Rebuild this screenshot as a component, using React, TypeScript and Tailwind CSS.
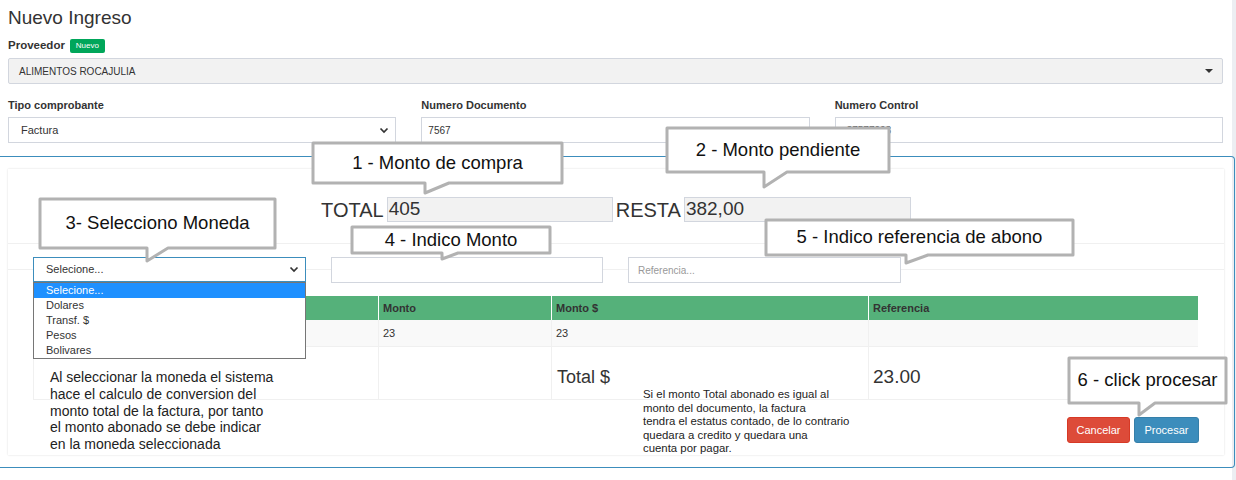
import React from 'react';

type CalloutProps = {
  x: number;
  y: number;
  w: number;
  h: number;
  tailX: number;
  tailW: number;
  tipY: number;
  text: string;
};

// speech bubble overlay used for the tutorial notes
const Callout: React.FC<CalloutProps> = ({ x, y, w, h, tailX, tailW, tipY, text }) => {
  const o = 3;
  const tx = tailX - x + o;
  const tip = tipY - y + o;
  const d = `M${o},${o} H${o + w} V${o + h} H${tx + tailW} L${tx},${tip} V${o + h} H${o} Z`;
  return (
    <>
      <svg
        className="absolute pointer-events-none"
        style={{ left: x - o, top: y - o }}
        width={w + o * 2}
        height={tip + o}
      >
        <path d={d} fill="#fff" stroke="#b2b2b2" strokeWidth="3" strokeLinejoin="round" />
      </svg>
      <div
        className="absolute flex items-center justify-center text-[18.5px] text-[#111] leading-none whitespace-nowrap"
        style={{ left: x, top: y, width: w, height: h }}
      >
        {text}
      </div>
    </>
  );
};

const Chevron: React.FC = () => (
  <svg width="10" height="7" viewBox="0 0 10 7" className="shrink-0">
    <path d="M1.5 1.5 L5 5 L8.5 1.5" fill="none" stroke="#333" strokeWidth="1.7" />
  </svg>
);

const App: React.FC = () => {
  const options = ['Selecione...', 'Dolares', 'Transf. $', 'Pesos', 'Bolivares'];

  return (
    <div
      className="relative w-[1236px] h-[480px] overflow-hidden bg-[linear-gradient(to_right,#fff_1232px,#eceef2_1232px)] text-[#333]"
      style={{ fontFamily: '"Liberation Sans", Arial, sans-serif' }}
    >
      {/* Top form */}
      <div className="w-[1231px] px-[8px] pt-[7px]">
        <h1 className="text-[19px] leading-[22px]">Nuevo Ingreso</h1>

        <div className="mt-[10px] flex items-center h-[14px]">
          <span className="text-[11.5px] font-bold">Proveedor</span>
          <span className="ml-[5px] h-[14px] w-[35px] rounded-[2px] bg-[#00a65a] text-white text-[8px] flex items-center justify-center">
            Nuevo
          </span>
        </div>
        <div className="mt-[5px] h-[26px] bg-[#f2f2f2] border border-[#d2d6de] rounded-[2px] flex items-center justify-between pl-[10px] pr-[9px]">
          <span className="text-[10px]">ALIMENTOS ROCAJULIA</span>
          <span className="w-0 h-0 border-l-[4px] border-r-[4px] border-t-[4px] border-l-transparent border-r-transparent border-t-[#333]" />
        </div>

        <div className="mt-[15px] grid grid-cols-3 gap-x-[25px]">
          <div>
            <div className="text-[11px] font-bold h-[12px] leading-[12px]">Tipo comprobante</div>
            <div className="mt-[6px] h-[26px] border border-[#d2d6de] flex items-center justify-between pl-[12px] pr-[6px]">
              <span className="text-[11px]">Factura</span>
              <Chevron />
            </div>
          </div>
          <div>
            <div className="text-[11px] font-bold h-[12px] leading-[12px]">Numero Documento</div>
            <div className="mt-[6px] h-[26px] border border-[#d2d6de] flex items-center pl-[6px]">
              <span className="text-[10px]">7567</span>
            </div>
          </div>
          <div>
            <div className="text-[11px] font-bold h-[12px] leading-[12px]">Numero Control</div>
            <div className="mt-[6px] h-[26px] border border-[#d2d6de] flex items-center pl-[11px]">
              <span className="text-[10px]">87577003</span>
            </div>
          </div>
        </div>
      </div>

      {/* Payment panel */}
      <div className="mt-[13px] w-[1235px] border border-l-0 border-[#3c8dbc] rounded-tr-[4px] rounded-br-[4px] pt-[12px] pl-[8px] pr-[10px] pb-[12px]">
        <div className="bg-white shadow-[0_0_2px_rgba(0,0,0,0.14)] pt-[28px] pb-[12px]">
          <div className="flex items-center justify-center h-[25px] text-[20px]">
            <span>TOTAL</span>
            <div className="ml-[3px] w-[226px] h-[25px] bg-[#f2f2f2] border border-[#d2d6de] flex items-center pl-[1px] text-[19px]">
              405
            </div>
            <span className="ml-[3px]">RESTA</span>
            <div className="ml-[3px] w-[227px] h-[25px] bg-[#f2f2f2] border border-[#d2d6de] flex items-center pl-[1px] text-[19px]">
              382,00
            </div>
          </div>

          <div className="mt-[21px] border-t border-[#f0f0f0] relative pt-[13px] px-[25px]">
            <div className="absolute left-0 right-0 top-[25px] h-px bg-[#f0f0f0]" />
            <div className="relative flex gap-[25px]">
              <div className="relative w-[273px] h-[25px] border border-[#3c8dbc] bg-white flex items-center justify-between pl-[12px] pr-[6px]">
                <span className="text-[11px]">Selecione...</span>
                <Chevron />
                <div className="absolute left-[-1px] top-[24px] w-[273px] border border-[#767676] bg-white z-20">
                  {options.map((o, i) => (
                    <div
                      key={o}
                      className={
                        i === 0
                          ? 'h-[15px] leading-[15px] pl-[12px] text-[11px] bg-[#1e90ff] text-white'
                          : 'h-[15px] leading-[15px] pl-[12px] text-[11px] text-[#333]'
                      }
                    >
                      {o}
                    </div>
                  ))}
                </div>
              </div>
              <div className="w-[272px] h-[26px] border border-[#d2d6de] bg-white" />
              <div className="w-[273px] h-[26px] border border-[#d2d6de] bg-white flex items-center pl-[9px]">
                <span className="text-[10px] text-[#999]">Referencia...</span>
              </div>
            </div>

            <div className="mt-[13px] grid grid-cols-[345px_173px_317px_330px] text-[11px]">
              <div className="h-[24px] bg-[#55b17a]" />
              <div className="h-[24px] bg-[#55b17a] border-l border-white font-bold flex items-center pl-[4px]">Monto</div>
              <div className="h-[24px] bg-[#55b17a] border-l border-white font-bold flex items-center pl-[4px]">Monto $</div>
              <div className="h-[24px] bg-[#55b17a] border-l border-white font-bold flex items-center pl-[4px]">Referencia</div>

              <div className="h-[27px] bg-[#f9f9f9] border-b border-[#f0f0f0]" />
              <div className="h-[27px] bg-[#f9f9f9] border-l border-b border-[#f0f0f0] flex items-center pl-[4px]">23</div>
              <div className="h-[27px] bg-[#f9f9f9] border-l border-b border-[#f0f0f0] flex items-center pl-[4px]">23</div>
              <div className="h-[27px] bg-[#f9f9f9] border-l border-b border-[#f0f0f0]" />

              <div className="h-[53px] border-l border-b border-[#f0f0f0]" />
              <div className="h-[53px] border-l border-b border-[#f0f0f0]" />
              <div className="h-[53px] border-l border-b border-[#f0f0f0] pl-[5px] pt-[19px] text-[18px] leading-[22px]">Total $</div>
              <div className="h-[53px] border-l border-b border-[#f0f0f0] pl-[4px] pt-[19px] text-[19px] leading-[22px]">23.00</div>
            </div>

            <div className="mt-[17px] flex justify-end gap-[4px] text-[11px] text-white">
              <button className="w-[63px] h-[26px] rounded-[3px] bg-[#dd4b39] border border-[#d73925]">Cancelar</button>
              <button className="w-[65px] h-[26px] rounded-[3px] bg-[#3c8dbc] border border-[#367fa9]">Procesar</button>
            </div>
          </div>
        </div>
      </div>

      {/* Notes */}
      <div className="absolute left-[50px] top-[369px] text-[14px] leading-[16.8px] text-[#222] whitespace-nowrap">
        Al seleccionar la moneda el sistema
        <br />
        hace el calculo de conversion del
        <br />
        monto total de la factura, por tanto
        <br />
        el monto abonado se debe indicar
        <br />
        en la moneda seleccionada
      </div>
      <div className="absolute left-[643px] top-[388px] text-[11.4px] leading-[13.6px] text-[#222] whitespace-nowrap">
        Si el monto Total abonado es igual al
        <br />
        monto del documento, la factura
        <br />
        tendra el estatus contado, de lo contrario
        <br />
        quedara a credito y quedara una
        <br />
        cuenta por pagar.
      </div>

      <Callout x={313} y={143} w={249} h={40} tailX={425} tailW={24} tipY={193} text="1 - Monto de compra" />
      <Callout x={667} y={128} w={222} h={44} tailX={764} tailW={23} tipY={187} text="2 - Monto pendiente" />
      <Callout x={40} y={199} w={235} h={49} tailX={147} tailW={21} tipY={261} text="3- Selecciono Moneda" />
      <Callout x={352} y={227} w={198} h={26} tailX={442} tailW={16} tipY={259} text="4 - Indico Monto" />
      <Callout x={766} y={220} w={307} h={35} tailX={906} tailW={22} tipY={263} text="5 - Indico referencia de abono" />
      <Callout x={1069} y={358} w={157} h={45} tailX={1139} tailW={16} tipY={415} text="6 - click procesar" />
    </div>
  );
};

export default App;
